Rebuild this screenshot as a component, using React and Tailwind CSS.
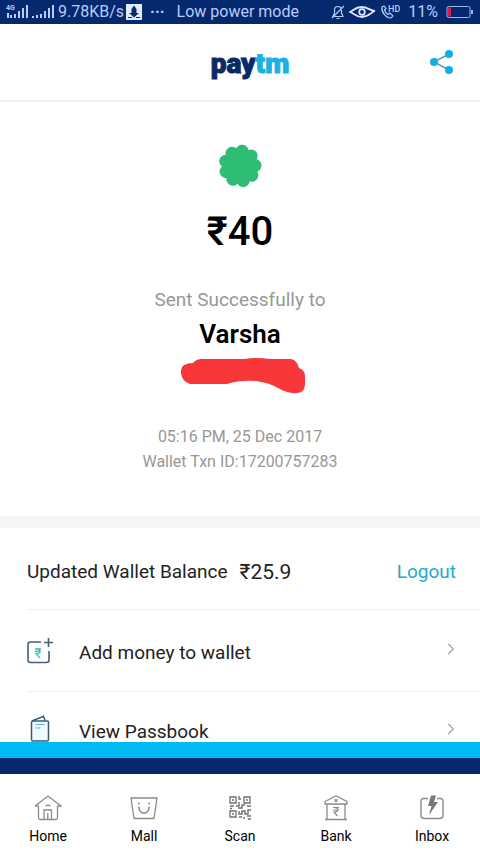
import React from 'react';
import { ChevronRight } from 'lucide-react';

// Status bar icons
const Signal = ({ label }) => (
  <svg width="24" height="16" viewBox="0 0 24 16" fill="#b9ccf5" aria-hidden="true">
    {label ? (
      <>
        <text x="0" y="6" fontSize="7" fontWeight="700" fontFamily="Roboto, sans-serif">4G</text>
        <rect x="1" y="9" width="2" height="5" />
        <rect x="4" y="11" width="2" height="3" />
      </>
    ) : (
      <>
        <rect x="0" y="12" width="2" height="2" />
        <rect x="4" y="11" width="2" height="3" />
      </>
    )}
    <rect x="8" y="10" width="2" height="4" />
    <rect x="12" y="7" width="2" height="7" />
    <rect x="16" y="4" width="2" height="10" />
    <rect x="20" y="1" width="2" height="13" />
  </svg>
);

const UpdateBadge = () => (
  <svg width="16" height="16" viewBox="0 0 16 16" aria-hidden="true">
    <rect width="16" height="16" fill="#e3ecff" />
    <path d="M8 1.500 10.500 5v4H13l-5 4.500L3 9h2.500V5z" fill="#0b2b70" />
    <path d="M2 13.500h4M10 13.500h4" stroke="#0b2b70" />
  </svg>
);

const MutedBell = () => (
  <svg width="14" height="16" viewBox="0 0 14 16" fill="none" stroke="#b9ccf5" strokeWidth="1.200" aria-hidden="true">
    <path d="M2 12.500h10L10.500 9V6a3.500 3.500 0 0 0-7 0v3zM5.500 14.500h3M1 14 13 2" />
  </svg>
);

const Eye = () => (
  <svg width="27" height="16" viewBox="0 0 27 16" fill="none" stroke="#dce7ff" strokeWidth="1.800" aria-hidden="true">
    <path d="M1 8c3-1 5-5 12-5 6 0 8 4 13 4-4 1-6 6-13 6C7 13 5 9 1 8z" />
    <circle cx="13" cy="8" r="2.800" />
  </svg>
);

const CallHd = () => (
  <svg width="20" height="16" viewBox="0 0 20 16" fill="none" stroke="#b9ccf5" strokeWidth="1.200" aria-hidden="true">
    <path d="M4 2 2 3c-1 5 4 11 9 11l2-2-3-3-2 1.500C6.500 9.500 5 8 4.500 6L6 4.500z" />
    <text x="8" y="8" fontSize="9" fontWeight="500" fontFamily="Roboto, sans-serif" fill="#b9ccf5" stroke="none">HD</text>
  </svg>
);

const Battery = () => (
  <svg width="28" height="14" viewBox="0 0 28 14" fill="none" aria-hidden="true">
    <rect x="1" y="1.500" width="23" height="11" rx="1.500" stroke="#9fb5e6" />
    <rect x="2" y="2.500" width="3" height="9" fill="#d9204c" />
    <path d="M26 5v4" stroke="#9fb5e6" strokeWidth="2" />
  </svg>
);

const ShareIcon = () => (
  <svg width="26" height="26" viewBox="0 0 26 26" fill="#12b0e0" aria-hidden="true">
    <path d="M19 5 4 13l15 8" fill="none" stroke="#5f9fb5" strokeWidth="1.600" />
    <circle cx="4" cy="13" r="4" />
    <circle cx="19" cy="5" r="4" />
    <circle cx="19" cy="21" r="4" />
  </svg>
);

const petals = [0, 40, 80, 120, 160, 200, 240, 280, 320];

const SuccessBadge = () => (
  <svg width="44" height="44" viewBox="0 0 44 44" fill="#2dbd74" role="img" aria-label="Success">
    <circle cx="22" cy="22" r="18" />
    {petals.map((a) => (
      <circle key={a} cx="22" cy="7" r="6.500" transform={`rotate(${a + 8} 22 22)`} />
    ))}
  </svg>
);

const Scribble = () => (
  <svg width="126" height="38" viewBox="0 0 126 38" fill="#f8373a" aria-hidden="true">
    <path d="M4 7Q8 5 13 5Q16 1 22 1L64 1Q78-1 90 1L111 1Q117 2 119 10Q125 12 125 18V27Q124 35 117 35Q108 36 98 30Q90 25 76 23Q60 22 47 26L10 26Q4 24 2 19Q-1 11 4 7Z" />
  </svg>
);

// List icons
const AddMoneyIcon = () => (
  <svg width="27" height="28" viewBox="0 0 27 28" fill="none" stroke="#47607a" strokeWidth="1.600" aria-hidden="true">
    <path d="M14 5H3.500Q1 5 1 7.500V23q0 2.500 2.500 2.500h16q2.500 0 2.500-2.500V14M21.500 1v9M17 5.500h9" />
    <path d="M8 12h6M8 14.500h6M9 12c5 0 5 5 0 5l4 4" stroke="#35bfca" strokeWidth="1.300" />
  </svg>
);

const PassbookIcon = () => (
  <svg width="27" height="27" viewBox="-3 0 27 27" fill="none" stroke="#3c5c74" strokeWidth="1.500" aria-hidden="true">
    <rect x="1.500" y="6" width="17" height="20" rx="1.500" fill="#eefaff" />
    <path d="M2 6 13.500 1.200 15 5.500" />
    <path d="M5.500 9.500h9M5.500 13h5" stroke="#58b5d8" strokeWidth="1" />
  </svg>
);

// Bottom nav icons
const HomeIcon = () => (
  <svg width="28" height="28" viewBox="0 0 28 28" fill="none" stroke="#8c8c8c" strokeWidth="1.300" aria-hidden="true">
    <path d="M1 12 14 2l13 10h-3.500M4.500 12H1M4.500 12v12q0 1.500 1.500 1.500h16q1.500 0 1.500-1.500V12M10 25.500V16h7.500v9.500M13.800 19v6M11.500 11.500h5" />
  </svg>
);

const MallIcon = () => (
  <svg width="28" height="28" viewBox="0 0 28 28" fill="none" stroke="#8c8c8c" strokeWidth="1.300" aria-hidden="true">
    <path d="M1 4h26l-3 20.500H4z" />
    <path d="M9 12.500c0 9 10 9 10 0M8 9.500h2M18 9.500h2" strokeWidth="1.600" />
  </svg>
);

const ScanIcon = () => (
  <svg width="28" height="28" viewBox="0 0 28 28" fill="none" stroke="#707070" strokeWidth="1.300" aria-hidden="true">
    <path d="M4 3h6v6H4zM18 3h6v6h-6zM4 17h6v6H4z" />
    <path d="M6 6h2M20 6h2M6 20h2M13 2v3h2M13 8v4h-3M4 12h4M4 14.500h2M12 14h4v-3h3M21 12h4M13 17v3h3v-3h3v3h3v-4h3M13 23h3M18 23v2M21 22h4M22 25h3" strokeWidth="1.400" />
  </svg>
);

const BankIcon = () => (
  <svg width="28" height="28" viewBox="0 0 28 28" fill="none" stroke="#8c8c8c" strokeWidth="1.300" aria-hidden="true">
    <path d="M3 7.500 14 2l11 5.500v2.500H3zM5 10v15M23 10v15M3 25.500h22" />
    <circle cx="14" cy="6.500" r="1" />
    <path d="M11 13.500h6M11 16h6M12 13.500c5 0 5 4.500 0 4.500l3.500 4" strokeWidth="1.200" />
  </svg>
);

const InboxIcon = () => (
  <svg width="28" height="28" viewBox="0 0 28 28" fill="none" stroke="#8c8c8c" strokeWidth="1.400" aria-hidden="true">
    <path d="M10 4.500H6Q3 4.500 3 7.500v14Q3 24.500 6 24.500h16q3 0 3-3v-14q0-3-3-3h-3" />
    <path d="M13 1.500h5L16 8h4l-9 13 2.500-9H10z" fill="#777" stroke="none" />
  </svg>
);

const listItems = [
  { label: 'Add money to wallet', icon: AddMoneyIcon },
  { label: 'View Passbook', icon: PassbookIcon },
];

const tabs = [
  { label: 'Home', icon: HomeIcon },
  { label: 'Mall', icon: MallIcon },
  { label: 'Scan', icon: ScanIcon },
  { label: 'Bank', icon: BankIcon },
  { label: 'Inbox', icon: InboxIcon },
];

const StatusBar = () => (
  <div className="flex h-6 items-center bg-[#04296f] pr-1.5 pl-1.5 text-base text-[#b9ccf5]">
    <div className="flex items-center gap-0.5">
      <Signal label />
      <Signal />
      <span>9.78KB/s</span>
      <UpdateBadge />
    </div>
    <span className="ml-2 font-bold">···</span>
    <span className="ml-3">Low power mode</span>
    <div className="ml-auto flex items-center gap-1">
      <MutedBell />
      <Eye />
      <CallHd />
      <span className="mx-1">11%</span>
      <Battery />
    </div>
  </div>
);

const Header = () => (
  <header className="grid grid-cols-3 items-center border-b-2 border-[#efefef] px-6 py-4">
    <h1 className="col-start-2 pt-1 pl-5 text-center text-[28px] leading-10 font-black text-[#0a2a66] [-webkit-text-stroke:1px]">
      pay<span className="text-[#1ab1e3]">tm</span>
    </h1>
    <button type="button" aria-label="Share" className="justify-self-end">
      <ShareIcon />
    </button>
  </header>
);

const App = () => {
  return (
    <div className="flex min-h-screen flex-col bg-white font-[Roboto,'Noto_Sans',sans-serif] text-[#222]">
      <StatusBar />
      <Header />

      {/* Payment summary */}
      <section className="flex flex-col items-center pt-[42px] pb-[42px] text-[#979797]">
        <SuccessBadge />
        <p className="mt-5 text-[40px] leading-12 font-medium text-black">₹40</p>
        <p className="mt-8 text-[19px] leading-6">Sent Successfully to</p>
        <p className="mt-1.5 text-[26px] leading-8 font-semibold text-black">Varsha</p>
        <div className="mt-2 pl-1.5">
          <Scribble />
        </div>
        <p className="mt-7 text-base leading-[25px]">05:16 PM, 25 Dec 2017</p>
        <p className="text-base leading-[25px]">Wallet Txn ID:17200757283</p>
      </section>

      <div className="h-3 bg-[#f5f5f5]" />

      {/* Wallet */}
      <section className="pl-[27px]">
        <div className="flex h-[82px] items-center border-b border-[#efefef] pt-2 pr-6">
          <span className="text-[19px]">Updated Wallet Balance</span>
          <span className="ml-3 text-[21px]">₹25.9</span>
          <button type="button" className="ml-auto text-[19px] text-[#20acc6]">Logout</button>
        </div>
        {listItems.map(({ label, icon: Icon }) => (
          <a key={label} href="#" className="flex h-[82px] items-center border-b border-[#efefef] pr-5 last:h-[50px] last:items-end last:border-0">
            <span className="flex w-[52px]">
              <Icon />
            </span>
            <span className="pt-1 text-[19px] leading-5">{label}</span>
            <span className="ml-auto pb-1 text-[#aaa]">
              <ChevronRight size={18} />
            </span>
          </a>
        ))}
      </section>

      <div className="h-4 bg-[#00b9f5]" />
      <div className="h-4 bg-[#04296f]" />

      <nav className="flex pt-5 pb-1">
        {tabs.map(({ label, icon: Icon }) => (
          <a key={label} href="#" className="flex flex-1 flex-col items-center gap-1 text-sm text-black">
            <Icon />
            {label}
          </a>
        ))}
      </nav>
    </div>
  );
};

export default App;
